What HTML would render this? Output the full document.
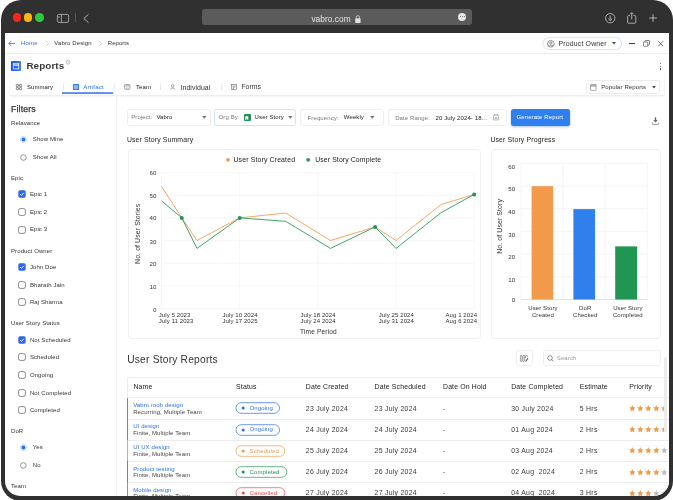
<!DOCTYPE html>
<html lang="en"><head><meta charset="utf-8"><title>Reports</title>
<style>
html,body{margin:0;padding:0;background:#fff;}
body{width:673px;height:500px;overflow:hidden;position:relative;will-change:transform;font-family:"Liberation Sans",Arial,sans-serif;}
.b{position:absolute;box-sizing:border-box;}
.t{position:absolute;white-space:nowrap;line-height:1;}
svg{position:absolute;overflow:visible;}
svg text{font-family:"Liberation Sans",Arial,sans-serif;}
</style></head><body>

<div class="b" style="left:1.00px;top:0.00px;width:672.00px;height:500.80px;background:#303030;border-radius:20px;"></div>
<div class="b" style="left:5.00px;top:32.00px;width:664.00px;height:463.50px;background:#fff;border-radius:0 0 15px 15px;overflow:hidden;"><div class="b" style="left:0.00px;top:0.00px;width:664.00px;height:0.50px;background:#303030;"></div>
<div class="b" style="left:0.00px;top:21.00px;width:664.00px;height:0.80px;background:#ececec;"></div>
<svg style="left:3px;top:7.5px" width="8" height="7" viewBox="0 0 8 7"><path d="M3.4 0.8 L0.8 3.5 L3.4 6.2 M0.8 3.5 H7" fill="none" stroke="#2f6fed" stroke-width="0.8"/></svg>
<div class="t " style="left:16.00px;top:8.00px;font-size:6.0px;color:#2f6fed;letter-spacing:0.199px;">Home</div>
<svg style="left:40px;top:8px" width="5" height="7" viewBox="0 0 5 7"><path d="M0.8 0.8 L3.6 3.5 L0.8 6.2" fill="none" stroke="#b8b8b8" stroke-width="0.6"/></svg>
<div class="t " style="left:49.30px;top:8.00px;font-size:6.0px;color:#333;letter-spacing:0.124px;">Vabro Design</div>
<svg style="left:93.4px;top:8px" width="5" height="7" viewBox="0 0 5 7"><path d="M0.8 0.8 L3.6 3.5 L0.8 6.2" fill="none" stroke="#b8b8b8" stroke-width="0.6"/></svg>
<div class="t " style="left:102.80px;top:8.00px;font-size:6.0px;color:#333;letter-spacing:0.027px;">Reports</div>
<svg style="left:535px;top:3px" width="86" height="18" viewBox="0 0 86 18"><rect x="2.6" y="2.7" width="79.2" height="12.4" rx="6.2" fill="#dfe9fb" opacity="0.6"/><rect x="2.9" y="2.4" width="78.6" height="12.2" rx="6.1" fill="#fff" stroke="#c9dbf8" stroke-width="0.7"/></svg>
<svg style="left:542.2px;top:7.700000000000003px" width="7.6" height="7.6" viewBox="0 0 16 16"><circle cx="8" cy="8" r="7" fill="none" stroke="#555" stroke-width="1.4"/><circle cx="8" cy="6.3" r="2.3" fill="none" stroke="#555" stroke-width="1.3"/><path d="M3.3 12.8 C4.5 10.3 11.5 10.3 12.7 12.8" fill="none" stroke="#555" stroke-width="1.3"/></svg>
<div class="t " style="left:553.60px;top:9.00px;font-size:6.9px;color:#333;letter-spacing:0.168px;">Product Owner</div>
<svg style="left:607.3px;top:10.299999999999997px" width="4" height="2.6" viewBox="0 0 8 5"><path d="M0 0 H8 L4 5 Z" fill="#444"/></svg>
<div class="b" style="left:624.30px;top:11.20px;width:5.80px;height:0.80px;background:#444;"></div>
<svg style="left:638px;top:8px" width="7" height="7" viewBox="0 0 14 14"><rect x="1" y="4" width="8.5" height="8.5" rx="1" fill="none" stroke="#444" stroke-width="1.3"/><path d="M4 4 V2 a1 1 0 0 1 1 -1 H12 a1 1 0 0 1 1 1 V9 a1 1 0 0 1 -1 1 H9.5" fill="none" stroke="#444" stroke-width="1.3"/></svg>
<svg style="left:652.5px;top:8.799999999999997px" width="5.4" height="5.4" viewBox="0 0 10 10"><path d="M0.5 0.5 L9.5 9.5 M9.5 0.5 L0.5 9.5" stroke="#444" stroke-width="1.4" fill="none"/></svg>
<svg style="left:6px;top:28.90px" width="10" height="10" viewBox="0 0 10 10"><defs><linearGradient id="rg" x1="0" y1="0" x2="1" y2="0"><stop offset="0" stop-color="#1a4dff"/><stop offset="1" stop-color="#3f7df6"/></linearGradient></defs><rect x="0" y="0" width="10" height="10" rx="1" fill="url(#rg)"/><rect x="2.2" y="2.5" width="5.6" height="2.3" fill="#fff" opacity="0.8"/><rect x="2.3" y="2.6" width="5.4" height="5.3" fill="none" stroke="#fff" stroke-width="0.75" opacity="0.95"/><path d="M3.6 2.6 V4 M5 2.6 V3.6 M6.4 2.6 V4" stroke="#2f63f8" stroke-width="0.5"/></svg>
<div class="t " style="left:21.40px;top:29.00px;font-size:9.9px;color:#3a3a3a;font-weight:700;letter-spacing:0.085px;">Reports</div>
<svg style="left:60.599999999999994px;top:28.200000000000003px" width="4.4" height="4.4" viewBox="0 0 10 10"><circle cx="5" cy="5" r="4.3" fill="none" stroke="#777" stroke-width="1"/><path d="M5 4.4 V7.4 M5 2.6 V3.4" stroke="#777" stroke-width="1"/></svg>
<div class="b" style="left:654.60px;top:30.60px;width:1.20px;height:1.20px;background:#444;border-radius:50%;"></div>
<div class="b" style="left:654.60px;top:33.50px;width:1.20px;height:1.20px;background:#444;border-radius:50%;"></div>
<div class="b" style="left:654.60px;top:36.40px;width:1.20px;height:1.20px;background:#444;border-radius:50%;"></div>
<div class="b" style="left:5.00px;top:45.50px;width:654.00px;height:17.00px;background:#fff;box-shadow:0 1.2px 2px rgba(0,0,0,.10);"></div>
<svg style="left:11px;top:52.2px" width="6" height="6" viewBox="0 0 6 6"><g fill="none" stroke="#333" stroke-width="0.55"><rect x="0.3" y="0.3" width="2.2" height="2.2" rx="0.5"/><rect x="3.5" y="0.3" width="2.2" height="2.2" rx="0.5"/><rect x="0.3" y="3.5" width="2.2" height="2.2" rx="0.5"/><rect x="3.5" y="3.5" width="2.2" height="2.2" rx="0.5"/></g></svg>
<div class="t " style="left:22.00px;top:52.00px;font-size:6.0px;color:#222;letter-spacing:0.047px;">Summary</div>
<div class="b" style="left:68.00px;top:52.00px;width:6.00px;height:6.00px;background:#3b78f0;border-radius:0.6px;"></div>
<div class="b" style="left:69.00px;top:53.00px;width:4.00px;height:4.00px;background:#8db2f7;"></div>
<div class="t " style="left:78.30px;top:52.00px;font-size:6.0px;color:#2f6fed;letter-spacing:0.254px;">Artifact</div>
<svg style="left:0;top:0" width="664" height="100" viewBox="0 0 664 100"><rect x="57" y="60.30" width="51.2" height="1.5" fill="#2f6fed"/><path d="M58.5 51.60 v6.4" stroke="#cfdefb" stroke-width="0.6"/><path d="M109.10 51.60 v6.4 M155.5 51.60 v6.4 M216.70 51.60 v6.4" stroke="#d8d8d8" stroke-width="0.6"/></svg>
<svg style="left:118.8px;top:52.099999999999994px" width="6.4" height="5.8" viewBox="0 0 13 12"><g fill="none" stroke="#444" stroke-width="0.9"><rect x="0.8" y="1" width="11.4" height="10" rx="1.8"/><path d="M0.8 4.4 H12.2 M4.6 1 V4.4 M8.4 1 V4.4 M4.6 6.8 V11 M8.4 6.8 V11" stroke-width="0.7"/></g></svg>
<div class="t " style="left:130.90px;top:52.00px;font-size:6.0px;color:#222;letter-spacing:0.107px;">Team</div>
<svg style="left:165.4px;top:52px" width="5.4" height="6" viewBox="0 0 11 12"><g fill="none" stroke="#555" stroke-width="1"><circle cx="5.5" cy="3.6" r="2.6"/><path d="M1 11 C1 7 10 7 10 11"/></g></svg>
<div class="t " style="left:175.60px;top:53.00px;font-size:6.9px;color:#333;letter-spacing:0.065px;">Individual</div>
<svg style="left:226px;top:52.2px" width="6" height="5.8" viewBox="0 0 12 12"><g fill="none" stroke="#555" stroke-width="1.1"><rect x="0.8" y="0.8" width="10.4" height="10.4"/><path d="M3 4 H9 M3 6.5 H9 M3 9 H6"/></g></svg>
<div class="t " style="left:236.40px;top:52.00px;font-size:6.9px;color:#333;letter-spacing:-0.010px;">Forms</div>
<div class="b" style="left:580.60px;top:48.00px;width:74.60px;height:14.00px;border:0.7px solid #ebebeb;border-radius:2.5px;background:#fff;"></div>
<svg style="left:585px;top:51.599999999999994px" width="6.6" height="6.8" viewBox="0 0 13 14"><g fill="none" stroke="#555" stroke-width="1"><rect x="0.8" y="0.8" width="11.4" height="12.4" rx="1.2"/><path d="M0.8 4.4 H12.2 M0.8 2.6 H12.2"/></g></svg>
<div class="t " style="left:596.20px;top:52.00px;font-size:6.0px;color:#333;letter-spacing:0.109px;">Popular Reports</div>
<svg style="left:646.6px;top:54px" width="4" height="2.4" viewBox="0 0 8 5"><path d="M0 0 H8 L4 5 Z" fill="#444"/></svg>
<div class="b" style="left:111.00px;top:64.00px;width:0.70px;height:400.00px;background:#f0f0f0;"></div>
<div class="t " style="left:6.00px;top:73.00px;font-size:8.8px;color:#333;letter-spacing:0.135px;-webkit-text-stroke:0.25px #333;">Filters</div>
<div class="t " style="left:6.00px;top:88.00px;font-size:6.0px;color:#333;letter-spacing:0.102px;">Relavance</div>
<svg style="left:15px;top:104.00px" width="7" height="7" viewBox="0 0 7 7"><circle cx="3.4" cy="3.5" r="2.9" fill="#fff" stroke="#9dbdf9" stroke-width="0.7"/><circle cx="3.4" cy="3.5" r="1.9" fill="#2f6fed"/></svg>
<div class="t " style="left:27.80px;top:104.00px;font-size:6.0px;color:#333;letter-spacing:0.102px;">Show Mine</div>
<svg style="left:15px;top:121.70px" width="7" height="7" viewBox="0 0 7 7"><circle cx="3.4" cy="3.5" r="2.8" fill="#fff" stroke="#555" stroke-width="0.6"/></svg>
<div class="t " style="left:27.80px;top:122.00px;font-size:6.0px;color:#333;letter-spacing:0.102px;">Show All</div>
<div class="t " style="left:6.00px;top:143.00px;font-size:6.0px;color:#333;letter-spacing:0.102px;">Epic</div>
<svg style="left:13px;top:158.40px" width="8" height="8" viewBox="0 0 8 8"><rect x="0.3" y="0.3" width="7.4" height="7.4" rx="1.7" fill="#2a66f0"/><path d="M2.1 4.1 L3.5 5.4 L5.9 2.7" fill="none" stroke="#fff" stroke-width="0.9"/></svg>
<div class="t " style="left:24.90px;top:159.00px;font-size:6.0px;color:#333;letter-spacing:0.102px;">Epic 1</div>
<svg style="left:13px;top:176.30px" width="8" height="8" viewBox="0 0 8 8"><rect x="0.6" y="0.6" width="6.8" height="6.8" rx="1.7" fill="#fff" stroke="#4a4a4a" stroke-width="0.65"/></svg>
<div class="t " style="left:24.90px;top:177.00px;font-size:6.0px;color:#333;letter-spacing:0.102px;">Epic 2</div>
<svg style="left:13px;top:193.60px" width="8" height="8" viewBox="0 0 8 8"><rect x="0.6" y="0.6" width="6.8" height="6.8" rx="1.7" fill="#fff" stroke="#4a4a4a" stroke-width="0.65"/></svg>
<div class="t " style="left:24.90px;top:194.00px;font-size:6.0px;color:#333;letter-spacing:0.102px;">Epic 3</div>
<div class="t " style="left:6.00px;top:216.00px;font-size:6.0px;color:#333;letter-spacing:0.102px;">Product Owner</div>
<svg style="left:13px;top:231.30px" width="8" height="8" viewBox="0 0 8 8"><rect x="0.3" y="0.3" width="7.4" height="7.4" rx="1.7" fill="#2a66f0"/><path d="M2.1 4.1 L3.5 5.4 L5.9 2.7" fill="none" stroke="#fff" stroke-width="0.9"/></svg>
<div class="t " style="left:24.90px;top:232.00px;font-size:6.0px;color:#333;letter-spacing:0.102px;">John Doe</div>
<svg style="left:13px;top:248.70px" width="8" height="8" viewBox="0 0 8 8"><rect x="0.6" y="0.6" width="6.8" height="6.8" rx="1.7" fill="#fff" stroke="#4a4a4a" stroke-width="0.65"/></svg>
<div class="t " style="left:24.90px;top:250.00px;font-size:6.0px;color:#333;letter-spacing:0.102px;">Bharath Jain</div>
<svg style="left:13px;top:266.40px" width="8" height="8" viewBox="0 0 8 8"><rect x="0.6" y="0.6" width="6.8" height="6.8" rx="1.7" fill="#fff" stroke="#4a4a4a" stroke-width="0.65"/></svg>
<div class="t " style="left:24.90px;top:267.00px;font-size:6.0px;color:#333;letter-spacing:0.102px;">Raj Sharma</div>
<div class="t " style="left:6.00px;top:288.00px;font-size:6.0px;color:#333;letter-spacing:0.102px;">User Story Status</div>
<svg style="left:13px;top:303.70px" width="8" height="8" viewBox="0 0 8 8"><rect x="0.3" y="0.3" width="7.4" height="7.4" rx="1.7" fill="#2a66f0"/><path d="M2.1 4.1 L3.5 5.4 L5.9 2.7" fill="none" stroke="#fff" stroke-width="0.9"/></svg>
<div class="t " style="left:24.90px;top:305.00px;font-size:6.0px;color:#333;letter-spacing:0.102px;">Not Scheduled</div>
<svg style="left:13px;top:321.40px" width="8" height="8" viewBox="0 0 8 8"><rect x="0.6" y="0.6" width="6.8" height="6.8" rx="1.7" fill="#fff" stroke="#4a4a4a" stroke-width="0.65"/></svg>
<div class="t " style="left:24.90px;top:322.00px;font-size:6.0px;color:#333;letter-spacing:0.102px;">Scheduled</div>
<svg style="left:13px;top:339.10px" width="8" height="8" viewBox="0 0 8 8"><rect x="0.6" y="0.6" width="6.8" height="6.8" rx="1.7" fill="#fff" stroke="#4a4a4a" stroke-width="0.65"/></svg>
<div class="t " style="left:24.90px;top:340.00px;font-size:6.0px;color:#333;letter-spacing:0.102px;">Ongoing</div>
<svg style="left:13px;top:356.80px" width="8" height="8" viewBox="0 0 8 8"><rect x="0.6" y="0.6" width="6.8" height="6.8" rx="1.7" fill="#fff" stroke="#4a4a4a" stroke-width="0.65"/></svg>
<div class="t " style="left:24.90px;top:358.00px;font-size:6.0px;color:#333;letter-spacing:0.102px;">Not Completed</div>
<svg style="left:13px;top:374.40px" width="8" height="8" viewBox="0 0 8 8"><rect x="0.6" y="0.6" width="6.8" height="6.8" rx="1.7" fill="#fff" stroke="#4a4a4a" stroke-width="0.65"/></svg>
<div class="t " style="left:24.90px;top:375.00px;font-size:6.0px;color:#333;letter-spacing:0.102px;">Completed</div>
<div class="t " style="left:6.00px;top:396.00px;font-size:6.0px;color:#333;letter-spacing:0.102px;">DoR</div>
<svg style="left:15px;top:412.10px" width="7" height="7" viewBox="0 0 7 7"><circle cx="3.4" cy="3.5" r="2.9" fill="#fff" stroke="#9dbdf9" stroke-width="0.7"/><circle cx="3.4" cy="3.5" r="1.9" fill="#2f6fed"/></svg>
<div class="t " style="left:27.80px;top:412.00px;font-size:6.0px;color:#333;letter-spacing:0.102px;">Yes</div>
<svg style="left:15px;top:429.80px" width="7" height="7" viewBox="0 0 7 7"><circle cx="3.4" cy="3.5" r="2.8" fill="#fff" stroke="#555" stroke-width="0.6"/></svg>
<div class="t " style="left:27.80px;top:430.00px;font-size:6.0px;color:#333;letter-spacing:0.102px;">No</div>
<div class="t " style="left:6.00px;top:451.00px;font-size:6.0px;color:#333;letter-spacing:0.102px;">Team</div>
<div class="b" style="left:122.20px;top:77.20px;width:83.40px;height:16.40px;border:0.7px solid #eeeeee;border-radius:2.5px;background:#fff;"></div>
<div class="t " style="left:126.20px;top:82.00px;font-size:6.0px;color:#777;letter-spacing:0.107px;">Project:</div>
<div class="t " style="left:151.40px;top:82.00px;font-size:6.0px;color:#222;letter-spacing:0.102px;">Vabro</div>
<svg style="left:197px;top:84px" width="4.6" height="2.8" viewBox="0 0 8 5"><path d="M0 0 H8 L4 5 Z" fill="#777"/></svg>
<div class="b" style="left:209.30px;top:77.20px;width:82.20px;height:16.40px;border:0.8px solid #d3e1fb;border-radius:2.5px;background:#fff;"></div>
<div class="t " style="left:213.60px;top:82.00px;font-size:6.0px;color:#777;letter-spacing:0.102px;">Org By:</div>
<div class="b" style="left:238.60px;top:82.20px;width:7.20px;height:7.20px;background:#1f9254;border-radius:1px;"></div>
<svg style="left:240.4px;top:83.6px" width="3.6" height="4.4" viewBox="0 0 7 9"><path d="M0.5 0.5 H6.5 V8.5 L3.5 6.2 L0.5 8.5 Z" fill="#fff"/></svg>
<div class="t " style="left:249.60px;top:82.00px;font-size:6.0px;color:#222;letter-spacing:0.102px;">User Story</div>
<svg style="left:283px;top:84.4px" width="4.6" height="2.8" viewBox="0 0 8 5"><path d="M0 0 H8 L4 5 Z" fill="#777"/></svg>
<div class="b" style="left:295.30px;top:77.20px;width:83.80px;height:16.40px;border:0.7px solid #eeeeee;border-radius:2.5px;background:#fff;"></div>
<div class="t " style="left:302.60px;top:83.00px;font-size:6.0px;color:#777;letter-spacing:0.102px;">Frequency:</div>
<div class="t " style="left:338.80px;top:82.00px;font-size:6.0px;color:#222;letter-spacing:0.102px;">Weekly</div>
<svg style="left:365px;top:84.4px" width="4.6" height="2.8" viewBox="0 0 8 5"><path d="M0 0 H8 L4 5 Z" fill="#777"/></svg>
<div class="b" style="left:382.50px;top:77.20px;width:119.40px;height:16.40px;border:0.7px solid #eeeeee;border-radius:2.5px;background:#fff;"></div>
<div class="t " style="left:390.20px;top:83.00px;font-size:6.0px;color:#777;letter-spacing:0.102px;">Date Range:</div>
<div class="t " style="left:430.60px;top:83.00px;font-size:6.0px;color:#222;letter-spacing:0.102px;">20 July 2024- 18...</div>
<svg style="left:487.6px;top:82.2px" width="6" height="6.4" viewBox="0 0 12 13"><g fill="none" stroke="#777" stroke-width="1"><rect x="0.8" y="2.2" width="10.4" height="10" rx="1"/><path d="M3.4 0.4 V3.6 M8.6 0.4 V3.6 M3 7 H9 M3 9.6 H9"/></g></svg>
<div class="b" style="left:505.60px;top:77.00px;width:59.60px;height:16.60px;background:#2f7fee;border-radius:2.5px;box-shadow:0 1px 2.5px rgba(47,110,240,.4);"></div>
<div class="t " style="left:511.40px;top:82.00px;font-size:6.0px;color:#fff;letter-spacing:0.134px;">Generate Report</div>
<svg style="left:647px;top:85px" width="7" height="8" viewBox="0 0 7 8"><path d="M2.8 0.3 H4.2 V2.9 H5.7 L3.5 5.5 L1.3 2.9 H2.8 Z" fill="#666"/><path d="M0.4 5.6 V6.6 a0.8 0.8 0 0 0 0.8 0.8 H5.8 a0.8 0.8 0 0 0 0.8 -0.8 V5.6" fill="none" stroke="#666" stroke-width="0.7"/></svg>
<div class="t " style="left:121.90px;top:105.00px;font-size:6.9px;color:#222;letter-spacing:0.132px;">User Story Summary</div>
<div class="t " style="left:485.40px;top:105.00px;font-size:6.9px;color:#222;letter-spacing:0.152px;">User Story Progress</div>
<div class="b" style="left:122.50px;top:117.20px;width:353.20px;height:190.00px;border:0.7px solid #f0f0f0;border-radius:3.5px;background:#fff;"></div>
<div class="b" style="left:485.50px;top:117.20px;width:170.40px;height:190.00px;border:0.7px solid #f0f0f0;border-radius:3.5px;background:#fff;"></div>
<svg style="left:0;top:0" width="664" height="464" viewBox="0 0 664 464">
<path d="M156.50 140.80 H469.20" stroke="#f0f0f0" stroke-width="0.6"/>
<path d="M156.50 163.40 H469.20" stroke="#f0f0f0" stroke-width="0.6"/>
<path d="M156.50 186.00 H469.20" stroke="#f0f0f0" stroke-width="0.6"/>
<path d="M156.50 208.60 H469.20" stroke="#f0f0f0" stroke-width="0.6"/>
<path d="M156.50 231.20 H469.20" stroke="#f0f0f0" stroke-width="0.6"/>
<path d="M156.50 253.80 H469.20" stroke="#f0f0f0" stroke-width="0.6"/>
<path d="M156.50 276.40 H469.20" stroke="#f0f0f0" stroke-width="0.6"/>
<path d="M156.50 140.80 V276.40" stroke="#f0f0f0" stroke-width="0.6"/>
<path d="M234.68 140.80 V276.40" stroke="#f0f0f0" stroke-width="0.6"/>
<path d="M312.86 140.80 V276.40" stroke="#f0f0f0" stroke-width="0.6"/>
<path d="M391.04 140.80 V276.40" stroke="#f0f0f0" stroke-width="0.6"/>
<path d="M469.22 140.80 V276.40" stroke="#f0f0f0" stroke-width="0.6"/>
<text x="151.50" y="143" font-size="6.1" fill="#333" text-anchor="end" letter-spacing="0.104">60</text>
<text x="151.50" y="166" font-size="6.1" fill="#333" text-anchor="end" letter-spacing="0.104">50</text>
<text x="151.50" y="188" font-size="6.1" fill="#333" text-anchor="end" letter-spacing="0.104">40</text>
<text x="151.50" y="212" font-size="6.1" fill="#333" text-anchor="end" letter-spacing="0.104">30</text>
<text x="151.50" y="234" font-size="6.1" fill="#333" text-anchor="end" letter-spacing="0.104">20</text>
<text x="151.50" y="257" font-size="6.1" fill="#333" text-anchor="end" letter-spacing="0.104">10</text>
<text x="151.50" y="280" font-size="6.1" fill="#333" text-anchor="end" letter-spacing="0.104">0</text>
<polyline points="156.50,154.30 176.80,185.90 192.00,208.50 234.70,185.90 280.70,181.00 325.50,208.50 370.10,194.90 391.00,208.50 435.90,172.60 469.20,162.40" fill="none" stroke="#f2994a" stroke-width="0.85" stroke-linejoin="round"/>
<polyline points="156.50,168.90 176.80,185.90 192.00,216.40 234.70,185.90 280.70,189.30 325.50,216.40 370.10,194.90 391.00,216.40 435.90,180.80 469.20,162.40" fill="none" stroke="#219653" stroke-width="0.85" stroke-linejoin="round"/>
<circle cx="176.80" cy="185.90" r="2" fill="#219653"/>
<circle cx="234.70" cy="185.90" r="2" fill="#219653"/>
<circle cx="370.10" cy="194.90" r="2" fill="#219653"/>
<circle cx="469.20" cy="162.40" r="2" fill="#219653"/>
<circle cx="223.00" cy="127.80" r="1.9" fill="#f2994a"/>
<text x="228.50" y="130" font-size="6.9" fill="#222" text-anchor="start" letter-spacing="0.147">User Story Created</text>
<circle cx="303.20" cy="127.80" r="1.9" fill="#219653"/>
<text x="310.20" y="130" font-size="6.9" fill="#222" text-anchor="start" letter-spacing="0.103">User Story Complete</text>
<text transform="translate(135 201.80) rotate(-90)" font-size="6.9" fill="#333" text-anchor="middle" letter-spacing="0.111">No. of User Stories</text>
<text x="153.70" y="285" font-size="6.0" fill="#333" text-anchor="start" letter-spacing="0.102">July 5 2023</text>
<text x="153.70" y="291" font-size="6.0" fill="#333" text-anchor="start" letter-spacing="0.102">July 11 2023</text>
<text x="235.05" y="285" font-size="6.0" fill="#333" text-anchor="middle" letter-spacing="0.102">July 10 2024</text>
<text x="235.05" y="291" font-size="6.0" fill="#333" text-anchor="middle" letter-spacing="0.102">July 17 2025</text>
<text x="313.05" y="285" font-size="6.0" fill="#333" text-anchor="middle" letter-spacing="0.102">July 18 2024</text>
<text x="313.05" y="291" font-size="6.0" fill="#333" text-anchor="middle" letter-spacing="0.102">July 24 2024</text>
<text x="391.35" y="285" font-size="6.0" fill="#333" text-anchor="middle" letter-spacing="0.102">July 25 2024</text>
<text x="391.35" y="291" font-size="6.0" fill="#333" text-anchor="middle" letter-spacing="0.102">July 31 2024</text>
<text x="472.10" y="285" font-size="6.0" fill="#333" text-anchor="end" letter-spacing="0.102">Aug 1 2024</text>
<text x="472.10" y="291" font-size="6.0" fill="#333" text-anchor="end" letter-spacing="0.102">Aug 6 2024</text>
<text x="313.47" y="302" font-size="6.6" fill="#333" text-anchor="middle" letter-spacing="0.145">Time Period</text>
<path d="M516.10 131.40 H642.30" stroke="#ecf0f8" stroke-width="0.7"/>
<path d="M516.10 154.08 H642.30" stroke="#ecf0f8" stroke-width="0.7"/>
<path d="M516.10 176.76 H642.30" stroke="#ecf0f8" stroke-width="0.7"/>
<path d="M516.10 199.44 H642.30" stroke="#ecf0f8" stroke-width="0.7"/>
<path d="M516.10 222.12 H642.30" stroke="#ecf0f8" stroke-width="0.7"/>
<path d="M516.10 244.80 H642.30" stroke="#ecf0f8" stroke-width="0.7"/>
<path d="M516.10 267.48 H642.30" stroke="#ecf0f8" stroke-width="0.7"/>
<path d="M516.10 131.40 V267.50" stroke="#ecf0f8" stroke-width="0.7"/>
<path d="M558.17 131.40 V267.50" stroke="#ecf0f8" stroke-width="0.7"/>
<path d="M600.24 131.40 V267.50" stroke="#ecf0f8" stroke-width="0.7"/>
<path d="M642.31 131.40 V267.50" stroke="#ecf0f8" stroke-width="0.7"/>
<path d="M516.10 267.50 H642.30" stroke="#cfd8ee" stroke-width="0.7"/>
<rect x="526.60" y="154.20" width="21.60" height="113.30" fill="#f2994a"/>
<rect x="568.40" y="177.10" width="21.70" height="90.40" fill="#2f80ed"/>
<rect x="610.20" y="214.40" width="22.00" height="53.10" fill="#219653"/>
<text x="510.30" y="137" font-size="6.1" fill="#333" text-anchor="end" letter-spacing="0.104">60</text>
<text x="510.30" y="159" font-size="6.1" fill="#333" text-anchor="end" letter-spacing="0.104">50</text>
<text x="510.30" y="182" font-size="6.1" fill="#333" text-anchor="end" letter-spacing="0.104">40</text>
<text x="510.30" y="205" font-size="6.1" fill="#333" text-anchor="end" letter-spacing="0.104">30</text>
<text x="510.30" y="227" font-size="6.1" fill="#333" text-anchor="end" letter-spacing="0.104">20</text>
<text x="510.30" y="250" font-size="6.1" fill="#333" text-anchor="end" letter-spacing="0.104">10</text>
<text x="510.30" y="270" font-size="6.1" fill="#333" text-anchor="end" letter-spacing="0.104">0</text>
<text transform="translate(497 194.40) rotate(-90)" font-size="6.9" fill="#333" text-anchor="middle" letter-spacing="0.123">No. of User Story</text>
<text x="537.95" y="278" font-size="6.0" fill="#333" text-anchor="middle" letter-spacing="0.102">User Story</text>
<text x="537.95" y="285" font-size="6.0" fill="#333" text-anchor="middle" letter-spacing="0.102">Created</text>
<text x="580.25" y="278" font-size="6.0" fill="#333" text-anchor="middle" letter-spacing="0.102">DoR</text>
<text x="580.25" y="285" font-size="6.0" fill="#333" text-anchor="middle" letter-spacing="0.102">Checked</text>
<text x="622.85" y="278" font-size="6.0" fill="#333" text-anchor="middle" letter-spacing="0.102">User Story</text>
<text x="622.85" y="285" font-size="6.0" fill="#333" text-anchor="middle" letter-spacing="0.102">Completed</text>
</svg>

<div class="t " style="left:122.20px;top:323.00px;font-size:10.2px;color:#333;letter-spacing:0.226px;">User Story Reports</div>
<div class="b" style="left:511.30px;top:318.40px;width:16.60px;height:16.00px;border:0.7px solid #eeeeee;border-radius:2.5px;background:#fff;"></div>
<svg style="left:515.4px;top:322.8px" width="8.4" height="7.4" viewBox="0 0 17 15"><g fill="none" stroke="#555" stroke-width="1.1"><rect x="0.8" y="1" width="3.4" height="12" rx="0.8"/><rect x="6" y="1" width="3.4" height="12" rx="0.8"/><path d="M11.2 6 V2 a1 1 0 0 1 1 -1 h1.6 a1 1 0 0 1 1 1 V4"/><path d="M11.5 13.5 L12 10.8 L15.4 6.2 L16.6 7.2 L13.4 12 Z" fill="#555" stroke-width="0.6"/></g></svg>
<div class="b" style="left:538.10px;top:318.40px;width:117.80px;height:16.00px;border:0.7px solid #eeeeee;border-radius:2.5px;background:#fff;"></div>
<svg style="left:541.6px;top:323px" width="7" height="7" viewBox="0 0 14 14"><circle cx="6" cy="6" r="4.6" fill="none" stroke="#444" stroke-width="1.2"/><path d="M9.4 9.4 L12.6 12.6" stroke="#444" stroke-width="1.2"/></svg>
<div class="t " style="left:551.80px;top:323.00px;font-size:6.0px;color:#999;letter-spacing:0.102px;">Search</div>
<div class="b" style="left:122.30px;top:344.60px;width:545.00px;height:130.00px;border:0.7px solid #ececec;border-right:0;border-radius:2px 0 0 0;background:#fff;"></div>
<div class="t " style="left:128.40px;top:352.00px;font-size:6.9px;color:#222;letter-spacing:0.152px;">Name</div>
<div class="t " style="left:231.10px;top:352.00px;font-size:6.9px;color:#222;letter-spacing:0.152px;">Status</div>
<div class="t " style="left:300.80px;top:352.00px;font-size:6.9px;color:#222;letter-spacing:0.152px;">Date Created</div>
<div class="t " style="left:369.60px;top:352.00px;font-size:6.9px;color:#222;letter-spacing:0.152px;">Date Scheduled</div>
<div class="t " style="left:438.00px;top:352.00px;font-size:6.9px;color:#222;letter-spacing:0.152px;">Date On Hold</div>
<div class="t " style="left:506.20px;top:352.00px;font-size:6.9px;color:#222;letter-spacing:0.152px;">Date Completed</div>
<div class="t " style="left:574.80px;top:352.00px;font-size:6.9px;color:#222;letter-spacing:0.152px;">Estimate</div>
<div class="t " style="left:624.20px;top:352.00px;font-size:6.9px;color:#222;letter-spacing:0.152px;">Priority</div>
<div class="b" style="left:122.30px;top:365.40px;width:545.00px;height:0.70px;background:#ececec;"></div>
<div class="b" style="left:122.30px;top:365.70px;width:1.00px;height:21.15px;background:#4e8af5;"></div>
<div class="t " style="left:128.20px;top:370.00px;font-size:6.0px;color:#2f6fed;letter-spacing:0.102px;">Vabro mob design</div>
<div class="t " style="left:128.20px;top:377.00px;font-size:6.0px;color:#444;letter-spacing:0.102px;">Recurring, Multiple Team</div>
<svg style="left:230px;top:370.37px" width="46.3" height="12" viewBox="0 0 46.3 12"><rect x="0.95" y="0.7" width="43.60" height="10.6" rx="5.3" fill="#fff" stroke="#2f6fed" stroke-width="0.7"/><circle cx="8.2" cy="6" r="1.55" fill="#2f6fed"/></svg>
<div class="t " style="left:244.60px;top:373.00px;font-size:6.0px;color:#2f6fed;letter-spacing:0.102px;">Ongoing</div>
<div class="t " style="left:300.80px;top:374.00px;font-size:6.9px;color:#3a3a3a;letter-spacing:0.270px;">23 July 2024</div>
<div class="t " style="left:369.60px;top:374.00px;font-size:6.9px;color:#3a3a3a;letter-spacing:0.270px;">23 July 2024</div>
<div class="t " style="left:438.00px;top:374.00px;font-size:6.9px;color:#3a3a3a;letter-spacing:0.270px;">-</div>
<div class="t " style="left:506.20px;top:374.00px;font-size:6.9px;color:#3a3a3a;letter-spacing:0.270px;">30 July 2024</div>
<div class="t " style="left:574.80px;top:374.00px;font-size:6.9px;color:#3a3a3a;letter-spacing:0.270px;">5 Hrs</div>
<svg style="left:623.80px;top:373.07px" width="6.6" height="6.6" viewBox="0 0 10 10"><path d="M5 0.4 L6.4 3.5 L9.8 3.9 L7.3 6.2 L8 9.6 L5 7.9 L2 9.6 L2.7 6.2 L0.2 3.9 L3.6 3.5 Z" fill="#f2994a"/></svg>
<svg style="left:631.80px;top:373.07px" width="6.6" height="6.6" viewBox="0 0 10 10"><path d="M5 0.4 L6.4 3.5 L9.8 3.9 L7.3 6.2 L8 9.6 L5 7.9 L2 9.6 L2.7 6.2 L0.2 3.9 L3.6 3.5 Z" fill="#f2994a"/></svg>
<svg style="left:639.80px;top:373.07px" width="6.6" height="6.6" viewBox="0 0 10 10"><path d="M5 0.4 L6.4 3.5 L9.8 3.9 L7.3 6.2 L8 9.6 L5 7.9 L2 9.6 L2.7 6.2 L0.2 3.9 L3.6 3.5 Z" fill="#f2994a"/></svg>
<svg style="left:647.80px;top:373.07px" width="6.6" height="6.6" viewBox="0 0 10 10"><path d="M5 0.4 L6.4 3.5 L9.8 3.9 L7.3 6.2 L8 9.6 L5 7.9 L2 9.6 L2.7 6.2 L0.2 3.9 L3.6 3.5 Z" fill="#f2994a"/></svg>
<svg style="left:655.80px;top:373.07px" width="6.6" height="6.6" viewBox="0 0 10 10"><path d="M5 0.4 L6.4 3.5 L9.8 3.9 L7.3 6.2 L8 9.6 L5 7.9 L2 9.6 L2.7 6.2 L0.2 3.9 L3.6 3.5 Z" fill="#f2994a"/></svg>
<div class="b" style="left:122.30px;top:386.55px;width:545.00px;height:0.70px;background:#ececec;"></div>
<div class="b" style="left:122.30px;top:386.85px;width:1.00px;height:21.15px;background:#4e8af5;"></div>
<div class="t " style="left:128.20px;top:391.00px;font-size:6.0px;color:#2f6fed;letter-spacing:0.102px;">UI design</div>
<div class="t " style="left:128.20px;top:398.00px;font-size:6.0px;color:#444;letter-spacing:0.102px;">Finite, Multiple Team</div>
<svg style="left:230px;top:391.52px" width="46.3" height="12" viewBox="0 0 46.3 12"><rect x="0.95" y="0.7" width="43.60" height="10.6" rx="5.3" fill="#fff" stroke="#2f6fed" stroke-width="0.7"/><circle cx="8.2" cy="6" r="1.55" fill="#2f6fed"/></svg>
<div class="t " style="left:244.60px;top:394.00px;font-size:6.0px;color:#2f6fed;letter-spacing:0.102px;">Ongoing</div>
<div class="t " style="left:300.80px;top:395.00px;font-size:6.9px;color:#3a3a3a;letter-spacing:0.270px;">24 July 2024</div>
<div class="t " style="left:369.60px;top:395.00px;font-size:6.9px;color:#3a3a3a;letter-spacing:0.270px;">24 July 2024</div>
<div class="t " style="left:438.00px;top:395.00px;font-size:6.9px;color:#3a3a3a;letter-spacing:0.270px;">-</div>
<div class="t " style="left:506.20px;top:395.00px;font-size:6.9px;color:#3a3a3a;letter-spacing:0.270px;">01 Aug 2024</div>
<div class="t " style="left:574.80px;top:395.00px;font-size:6.9px;color:#3a3a3a;letter-spacing:0.270px;">2 Hrs</div>
<svg style="left:623.80px;top:394.22px" width="6.6" height="6.6" viewBox="0 0 10 10"><path d="M5 0.4 L6.4 3.5 L9.8 3.9 L7.3 6.2 L8 9.6 L5 7.9 L2 9.6 L2.7 6.2 L0.2 3.9 L3.6 3.5 Z" fill="#f2994a"/></svg>
<svg style="left:631.80px;top:394.22px" width="6.6" height="6.6" viewBox="0 0 10 10"><path d="M5 0.4 L6.4 3.5 L9.8 3.9 L7.3 6.2 L8 9.6 L5 7.9 L2 9.6 L2.7 6.2 L0.2 3.9 L3.6 3.5 Z" fill="#f2994a"/></svg>
<svg style="left:639.80px;top:394.22px" width="6.6" height="6.6" viewBox="0 0 10 10"><path d="M5 0.4 L6.4 3.5 L9.8 3.9 L7.3 6.2 L8 9.6 L5 7.9 L2 9.6 L2.7 6.2 L0.2 3.9 L3.6 3.5 Z" fill="#f2994a"/></svg>
<svg style="left:647.80px;top:394.22px" width="6.6" height="6.6" viewBox="0 0 10 10"><path d="M5 0.4 L6.4 3.5 L9.8 3.9 L7.3 6.2 L8 9.6 L5 7.9 L2 9.6 L2.7 6.2 L0.2 3.9 L3.6 3.5 Z" fill="#f2994a"/></svg>
<svg style="left:655.80px;top:394.22px" width="6.6" height="6.6" viewBox="0 0 10 10"><path d="M5 0.4 L6.4 3.5 L9.8 3.9 L7.3 6.2 L8 9.6 L5 7.9 L2 9.6 L2.7 6.2 L0.2 3.9 L3.6 3.5 Z" fill="#f2994a"/></svg>
<div class="b" style="left:122.30px;top:407.70px;width:545.00px;height:0.70px;background:#ececec;"></div>
<div class="b" style="left:122.30px;top:408.00px;width:1.00px;height:21.15px;background:#f4a660;"></div>
<div class="t " style="left:128.20px;top:412.00px;font-size:6.0px;color:#2f6fed;letter-spacing:0.102px;">UI UX design</div>
<div class="t " style="left:128.20px;top:419.00px;font-size:6.0px;color:#444;letter-spacing:0.102px;">Finite, Multiple Team</div>
<svg style="left:230px;top:412.67px" width="51.6" height="12" viewBox="0 0 51.6 12"><rect x="0.95" y="0.7" width="48.90" height="10.6" rx="5.3" fill="#fff" stroke="#f2994a" stroke-width="0.7"/><circle cx="8.2" cy="6" r="1.55" fill="#f2994a"/></svg>
<div class="t " style="left:244.60px;top:416.00px;font-size:6.0px;color:#f2994a;letter-spacing:0.102px;">Scheduled</div>
<div class="t " style="left:300.80px;top:416.00px;font-size:6.9px;color:#3a3a3a;letter-spacing:0.270px;">25 July 2024</div>
<div class="t " style="left:369.60px;top:416.00px;font-size:6.9px;color:#3a3a3a;letter-spacing:0.270px;">25 July 2024</div>
<div class="t " style="left:438.00px;top:416.00px;font-size:6.9px;color:#3a3a3a;letter-spacing:0.270px;">-</div>
<div class="t " style="left:506.20px;top:416.00px;font-size:6.9px;color:#3a3a3a;letter-spacing:0.270px;">03 Aug 2024</div>
<div class="t " style="left:574.80px;top:416.00px;font-size:6.9px;color:#3a3a3a;letter-spacing:0.270px;">2 Hrs</div>
<svg style="left:623.80px;top:415.37px" width="6.6" height="6.6" viewBox="0 0 10 10"><path d="M5 0.4 L6.4 3.5 L9.8 3.9 L7.3 6.2 L8 9.6 L5 7.9 L2 9.6 L2.7 6.2 L0.2 3.9 L3.6 3.5 Z" fill="#f2994a"/></svg>
<svg style="left:631.80px;top:415.37px" width="6.6" height="6.6" viewBox="0 0 10 10"><path d="M5 0.4 L6.4 3.5 L9.8 3.9 L7.3 6.2 L8 9.6 L5 7.9 L2 9.6 L2.7 6.2 L0.2 3.9 L3.6 3.5 Z" fill="#f2994a"/></svg>
<svg style="left:639.80px;top:415.37px" width="6.6" height="6.6" viewBox="0 0 10 10"><path d="M5 0.4 L6.4 3.5 L9.8 3.9 L7.3 6.2 L8 9.6 L5 7.9 L2 9.6 L2.7 6.2 L0.2 3.9 L3.6 3.5 Z" fill="#f2994a"/></svg>
<svg style="left:647.80px;top:415.37px" width="6.6" height="6.6" viewBox="0 0 10 10"><path d="M5 0.4 L6.4 3.5 L9.8 3.9 L7.3 6.2 L8 9.6 L5 7.9 L2 9.6 L2.7 6.2 L0.2 3.9 L3.6 3.5 Z" fill="#f2994a"/></svg>
<svg style="left:655.80px;top:415.37px" width="6.6" height="6.6" viewBox="0 0 10 10"><path d="M5 0.4 L6.4 3.5 L9.8 3.9 L7.3 6.2 L8 9.6 L5 7.9 L2 9.6 L2.7 6.2 L0.2 3.9 L3.6 3.5 Z" fill="#bdbdbd"/></svg>
<div class="b" style="left:122.30px;top:428.85px;width:545.00px;height:0.70px;background:#ececec;"></div>
<div class="b" style="left:122.30px;top:429.15px;width:1.00px;height:21.15px;background:#3aa76d;"></div>
<div class="t " style="left:128.20px;top:434.00px;font-size:6.0px;color:#2f6fed;letter-spacing:0.102px;">Product testing</div>
<div class="t " style="left:128.20px;top:440.00px;font-size:6.0px;color:#444;letter-spacing:0.102px;">Finite, Multiple Team</div>
<svg style="left:230px;top:433.82px" width="53.6" height="12" viewBox="0 0 53.6 12"><rect x="0.95" y="0.7" width="50.90" height="10.6" rx="5.3" fill="#fff" stroke="#219653" stroke-width="0.7"/><circle cx="8.2" cy="6" r="1.55" fill="#219653"/></svg>
<div class="t " style="left:244.60px;top:437.00px;font-size:6.0px;color:#219653;letter-spacing:0.102px;">Completed</div>
<div class="t " style="left:300.80px;top:437.00px;font-size:6.9px;color:#3a3a3a;letter-spacing:0.270px;">26 July 2024</div>
<div class="t " style="left:369.60px;top:437.00px;font-size:6.9px;color:#3a3a3a;letter-spacing:0.270px;">26 July 2024</div>
<div class="t " style="left:438.00px;top:437.00px;font-size:6.9px;color:#3a3a3a;letter-spacing:0.270px;">-</div>
<div class="t " style="left:506.20px;top:437.00px;font-size:6.9px;color:#3a3a3a;letter-spacing:0.270px;">02 Aug&nbsp; 2024</div>
<div class="t " style="left:574.80px;top:437.00px;font-size:6.9px;color:#3a3a3a;letter-spacing:0.270px;">2 Hrs</div>
<svg style="left:623.80px;top:436.52px" width="6.6" height="6.6" viewBox="0 0 10 10"><path d="M5 0.4 L6.4 3.5 L9.8 3.9 L7.3 6.2 L8 9.6 L5 7.9 L2 9.6 L2.7 6.2 L0.2 3.9 L3.6 3.5 Z" fill="#f2994a"/></svg>
<svg style="left:631.80px;top:436.52px" width="6.6" height="6.6" viewBox="0 0 10 10"><path d="M5 0.4 L6.4 3.5 L9.8 3.9 L7.3 6.2 L8 9.6 L5 7.9 L2 9.6 L2.7 6.2 L0.2 3.9 L3.6 3.5 Z" fill="#f2994a"/></svg>
<svg style="left:639.80px;top:436.52px" width="6.6" height="6.6" viewBox="0 0 10 10"><path d="M5 0.4 L6.4 3.5 L9.8 3.9 L7.3 6.2 L8 9.6 L5 7.9 L2 9.6 L2.7 6.2 L0.2 3.9 L3.6 3.5 Z" fill="#f2994a"/></svg>
<svg style="left:647.80px;top:436.52px" width="6.6" height="6.6" viewBox="0 0 10 10"><path d="M5 0.4 L6.4 3.5 L9.8 3.9 L7.3 6.2 L8 9.6 L5 7.9 L2 9.6 L2.7 6.2 L0.2 3.9 L3.6 3.5 Z" fill="#f2994a"/></svg>
<svg style="left:655.80px;top:436.52px" width="6.6" height="6.6" viewBox="0 0 10 10"><path d="M5 0.4 L6.4 3.5 L9.8 3.9 L7.3 6.2 L8 9.6 L5 7.9 L2 9.6 L2.7 6.2 L0.2 3.9 L3.6 3.5 Z" fill="#bdbdbd"/></svg>
<div class="b" style="left:122.30px;top:450.00px;width:545.00px;height:0.70px;background:#ececec;"></div>
<div class="b" style="left:122.30px;top:450.30px;width:1.00px;height:21.15px;background:#ef6f6f;"></div>
<div class="t " style="left:128.20px;top:455.00px;font-size:6.0px;color:#2f6fed;letter-spacing:0.102px;">Mobile design</div>
<div class="t " style="left:128.20px;top:461.00px;font-size:6.0px;color:#444;letter-spacing:0.102px;">Finite, Multiple Team</div>
<svg style="left:230px;top:454.97px" width="51.6" height="12" viewBox="0 0 51.6 12"><rect x="0.95" y="0.7" width="48.90" height="10.6" rx="5.3" fill="#fff" stroke="#eb4d4d" stroke-width="0.7"/><circle cx="8.2" cy="6" r="1.55" fill="#eb4d4d"/></svg>
<div class="t " style="left:244.60px;top:458.00px;font-size:6.0px;color:#eb4d4d;letter-spacing:0.102px;">Cancelled</div>
<div class="t " style="left:300.80px;top:458.00px;font-size:6.9px;color:#3a3a3a;letter-spacing:0.270px;">27 July 2024</div>
<div class="t " style="left:369.60px;top:458.00px;font-size:6.9px;color:#3a3a3a;letter-spacing:0.270px;">27 July 2024</div>
<div class="t " style="left:438.00px;top:458.00px;font-size:6.9px;color:#3a3a3a;letter-spacing:0.270px;">-</div>
<div class="t " style="left:506.20px;top:458.00px;font-size:6.9px;color:#3a3a3a;letter-spacing:0.270px;">04 Aug&nbsp; 2024</div>
<div class="t " style="left:574.80px;top:458.00px;font-size:6.9px;color:#3a3a3a;letter-spacing:0.270px;">3 Hrs</div>
<svg style="left:623.80px;top:457.67px" width="6.6" height="6.6" viewBox="0 0 10 10"><path d="M5 0.4 L6.4 3.5 L9.8 3.9 L7.3 6.2 L8 9.6 L5 7.9 L2 9.6 L2.7 6.2 L0.2 3.9 L3.6 3.5 Z" fill="#f2994a"/></svg>
<svg style="left:631.80px;top:457.67px" width="6.6" height="6.6" viewBox="0 0 10 10"><path d="M5 0.4 L6.4 3.5 L9.8 3.9 L7.3 6.2 L8 9.6 L5 7.9 L2 9.6 L2.7 6.2 L0.2 3.9 L3.6 3.5 Z" fill="#f2994a"/></svg>
<svg style="left:639.80px;top:457.67px" width="6.6" height="6.6" viewBox="0 0 10 10"><path d="M5 0.4 L6.4 3.5 L9.8 3.9 L7.3 6.2 L8 9.6 L5 7.9 L2 9.6 L2.7 6.2 L0.2 3.9 L3.6 3.5 Z" fill="#f2994a"/></svg>
<svg style="left:647.80px;top:457.67px" width="6.6" height="6.6" viewBox="0 0 10 10"><path d="M5 0.4 L6.4 3.5 L9.8 3.9 L7.3 6.2 L8 9.6 L5 7.9 L2 9.6 L2.7 6.2 L0.2 3.9 L3.6 3.5 Z" fill="#bdbdbd"/></svg>
<svg style="left:655.80px;top:457.67px" width="6.6" height="6.6" viewBox="0 0 10 10"><path d="M5 0.4 L6.4 3.5 L9.8 3.9 L7.3 6.2 L8 9.6 L5 7.9 L2 9.6 L2.7 6.2 L0.2 3.9 L3.6 3.5 Z" fill="#bdbdbd"/></svg>
<div class="b" style="left:659.40px;top:324.80px;width:3.00px;height:75.40px;background:#ececec;border-radius:1.5px;"></div></div>
<div class="b" style="left:12.50px;top:13.10px;width:8.60px;height:8.60px;background:#f5271c;border-radius:50%;"></div>
<div class="b" style="left:23.90px;top:13.10px;width:8.60px;height:8.60px;background:#fcb80e;border-radius:50%;"></div>
<div class="b" style="left:35.10px;top:13.10px;width:8.60px;height:8.60px;background:#2fc83f;border-radius:50%;"></div>
<svg style="left:57px;top:13.8px" width="12" height="8.8" viewBox="0 0 12 8.8"><rect x="0.4" y="0.4" width="11.2" height="8" rx="1.4" fill="none" stroke="#c4c4c4" stroke-width="0.75"/><path d="M4.4 0.4 V8.4" stroke="#c4c4c4" stroke-width="0.75"/><path d="M2 2 V4" stroke="#c4c4c4" stroke-width="0.7"/></svg>
<div class="b" style="left:75.30px;top:13.00px;width:0.60px;height:9.40px;background:#555;"></div>
<svg style="left:82.6px;top:13.6px" width="6" height="9" viewBox="0 0 6 9"><path d="M5.4 0.4 L0.8 4.5 L5.4 8.6" fill="none" stroke="#d0d0d0" stroke-width="0.8"/></svg>
<div class="b" style="left:202.00px;top:9.20px;width:270.00px;height:15.40px;background:#5b5b5b;border-radius:3px;"></div>
<div class="t " style="left:311.40px;top:15.00px;font-size:8.3px;color:#e4e4e4;letter-spacing:0.060px;">vabro.com</div>
<svg style="left:354.6px;top:14.8px" width="5.8" height="8" viewBox="0 0 5.8 8"><rect x="0.2" y="3.2" width="5.4" height="4.7" rx="0.6" fill="#e0e0e0"/><path d="M1.3 3.4 V2.2 a1.6 1.6 0 0 1 3.2 0 V3.4" fill="none" stroke="#e0e0e0" stroke-width="0.8"/></svg>
<div class="b" style="left:458.00px;top:12.80px;width:8.20px;height:8.20px;background:#e6e6e6;border-radius:50%;"></div>
<div class="b" style="left:459.70px;top:16.40px;width:1.00px;height:1.00px;background:#5b5b5b;border-radius:50%;"></div>
<div class="b" style="left:461.60px;top:16.40px;width:1.00px;height:1.00px;background:#5b5b5b;border-radius:50%;"></div>
<div class="b" style="left:463.50px;top:16.40px;width:1.00px;height:1.00px;background:#5b5b5b;border-radius:50%;"></div>
<svg style="left:605px;top:12.8px" width="10.4" height="10.4" viewBox="0 0 10.4 10.4"><circle cx="5.2" cy="5.2" r="4.7" fill="none" stroke="#d0d0d0" stroke-width="0.75"/><path d="M5.2 2.6 V7.4 M3.2 5.6 L5.2 7.6 L7.2 5.6" fill="none" stroke="#d0d0d0" stroke-width="0.8"/></svg>
<svg style="left:627px;top:11.6px" width="9.4" height="11.6" viewBox="0 0 9.4 11.6"><path d="M3 3.6 H1.6 a1 1 0 0 0 -1 1 V10.2 a1 1 0 0 0 1 1 H7.8 a1 1 0 0 0 1 -1 V4.6 a1 1 0 0 0 -1 -1 H6.4" fill="none" stroke="#d0d0d0" stroke-width="0.75"/><path d="M4.7 7.4 V0.8 M3 2.4 L4.7 0.7 L6.4 2.4" fill="none" stroke="#d0d0d0" stroke-width="0.75"/></svg>
<svg style="left:649.4px;top:14.2px" width="8" height="8" viewBox="0 0 8 8"><path d="M4 0.2 V7.8 M0.2 4 H7.8" stroke="#d0d0d0" stroke-width="0.8"/></svg>
</body></html>
